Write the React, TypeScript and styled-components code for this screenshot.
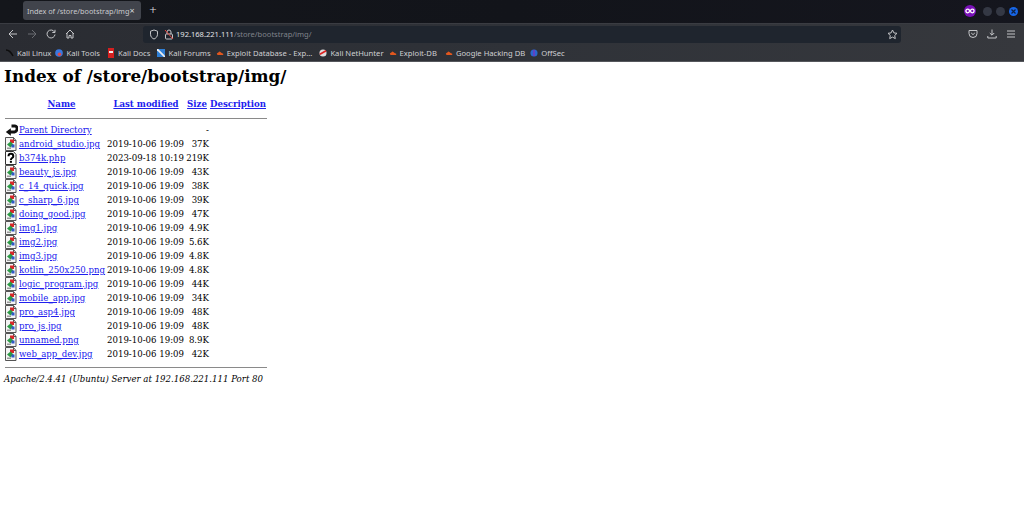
import React from "react";
import styled, { createGlobalStyle } from "styled-components";

const Global = createGlobalStyle`
  html, body { margin: 0; padding: 0; background: #fff; }
  body { width: 1024px; height: 510px; overflow: hidden; }
`;

const Browser = styled.div`
  width: 1024px;
  height: 510px;
  display: flex;
  flex-direction: column;
  overflow: hidden;
`;

const Chrome = styled.div`
  font-family: "Noto Sans", "Open Sans", sans-serif;
  color: #d5d6d8;
  flex: none;
`;

const TabBar = styled.div`
  height: 22px;
  background: linear-gradient(90deg, #14161b 0%, #12141a 50%, #15161e 100%);
  display: flex;
  align-items: flex-start;
  padding: 1px 6px 0 23px;
`;

const Tab = styled.div`
  width: 118px;
  height: 19px;
  background: #41444c;
  border-radius: 3px;
  display: flex;
  align-items: center;
  padding-left: 4px;
  box-sizing: border-box;
  font-size: 7.3px;
  color: #c9cacd;
  white-space: nowrap;
`;

const TabClose = styled.span`
  font-size: 9px;
  color: #d5d6d8;
`;

const NewTab = styled.span`
  width: 24px;
  text-align: center;
  font-size: 13px;
  line-height: 19px;
  color: #e0e0e2;
  font-weight: 300;
`;

const Spacer = styled.div`
  flex: 1;
`;

const WindowButtons = styled.div`
  display: flex;
  align-items: center;
  gap: 4px;
  height: 20px;
`;

const WinDot = styled.span<{ $color: string }>`
  width: 9px;
  height: 9px;
  border-radius: 50%;
  background: ${(p) => p.$color};
  display: flex;
  align-items: center;
  justify-content: center;
`;

const MaskBadge = styled.span`
  width: 12px;
  height: 12px;
  border-radius: 50%;
  background: #7a10b8;
  display: flex;
  align-items: center;
  justify-content: center;
  margin-right: 3px;
`;

const Toolbar = styled.div`
  height: 21px;
  background: linear-gradient(90deg, #2a2c32 0%, #2f3238 50%, #36383d 100%);
  border-top: 1px solid #3a3c42;
  box-sizing: border-box;
  display: flex;
  align-items: center;
  padding-left: 8px;
  padding-right: 8px;
`;

const NavIcon = styled.span<{ $w: number }>`
  width: ${(p) => p.$w}px;
  display: flex;
  align-items: center;
  flex: none;
`;

const UrlBar = styled.div`
  width: 758px;
  height: 17px;
  margin-left: 5px;
  background: #1f252e;
  border-radius: 3px;
  display: flex;
  align-items: center;
  padding: 0 3px 0 6px;
  box-sizing: border-box;
  font-size: 7.55px;
  flex: none;
`;

const UrlHost = styled.span`
  color: #e2e3e5;
`;

const UrlPath = styled.span`
  color: #7f838a;
`;

const RightTools = styled.div`
  display: flex;
  align-items: center;
  gap: 9px;
  margin-left: auto;
`;

const Bookmarks = styled.div`
  height: 18px;
  background: linear-gradient(90deg, #2a2c32 0%, #2f3238 50%, #36383d 100%);
  border-bottom: 1px solid #55575c;
  box-sizing: border-box;
  display: flex;
  align-items: center;
  padding-left: 6px;
  font-size: 7.65px;
  color: #cfd0d3;
  white-space: nowrap;
`;

const Bookmark = styled.span<{ $gap: number }>`
  display: flex;
  align-items: center;
  gap: 3px;
  margin-right: ${(p) => p.$gap}px;
`;

const Page = styled.main`
  flex: 1;
  background: #fff;
  color: #000;
  font-family: "DejaVu Serif", serif;
  font-size: 8.6px;
  padding: 0 0 0 4px;
`;

const Title = styled.h1`
  margin: 3px 0 0;
  font-size: 16.85px;
  line-height: 23px;
  font-weight: 700;
`;

const Listing = styled.table`
  border-collapse: collapse;
  margin: 9px 0 0 1px;
  width: 262px;
  table-layout: fixed;
`;

const Head = styled.th<{ $w: number; $shift?: number }>`
  width: ${(p) => p.$w}px;
  height: 14px;
  padding: 0 ${(p) => p.$shift ?? 0}px 0 0;
  box-sizing: border-box;
  font-weight: 700;
  text-align: center;
  white-space: nowrap;
`;

const Cell = styled.td<{ $right?: boolean }>`
  height: 14px;
  padding: 0;
  line-height: 14px;
  white-space: nowrap;
  text-align: ${(p) => (p.$right ? "right" : "left")};
`;

const IconCell = styled.td`
  height: 14px;
  padding: 0;
  line-height: 0;
`;

const RuleCell = styled.th<{ $height: number; $offset: number }>`
  padding: ${(p) => p.$offset}px 0 0;
  height: ${(p) => p.$height}px;
  box-sizing: border-box;
  vertical-align: top;
`;

const Rule = styled.div`
  height: 1px;
  background: #8a8a8a;
`;

const FileLink = styled.a`
  color: #2020ee;
  text-decoration: underline;
`;

const Footer = styled.address`
  margin-top: 2px;
  font-style: italic;
  line-height: 12px;
`;

const ImageIcon = () => (
  <svg width="12" height="14" viewBox="0 0 12 14">
    <path d="M.5.5h8l2.500 3v10H.5z" fill="#f4f4f4" stroke="#555" />
    <path d="M8.500.5v3H11" fill="none" stroke="#555" />
    <rect x="5" y="2.500" width="4" height="3.500" fill="#d9262a" />
    <path d="M2 7.500 5.500 4.500 8.500 7.500 5.500 10.500z" fill="#2c9a45" />
    <rect x="6.500" y="7.500" width="3" height="3" fill="#3058c8" />
    <rect x="2" y="10.500" width="4" height="1.500" fill="#999" />
  </svg>
);

const UnknownIcon = () => (
  <svg width="12" height="14" viewBox="0 0 12 14">
    <path d="M.5.5h8l2.500 3v10H.5z" fill="#fff" stroke="#333" />
    <path d="M3.500 5.200c0-3.200 4.800-3.200 4.800 0 0 1.900-2.400 1.800-2.400 3.700" fill="none" stroke="#000" strokeWidth="2" />
    <rect x="4.900" y="9.800" width="2" height="2" fill="#000" />
  </svg>
);

const ParentIcon = () => (
  <svg width="13" height="12" viewBox="0 0 13 12">
    <path d="M6.500 2H10c2.800 0 2.800 5.500-.5 6H5" fill="none" stroke="#111" strokeWidth="2.800" />
    <path d="M.8 8l5-3.800v7.600z" fill="#111" />
  </svg>
);

const files: [string, string, string, "img" | "unk"][] = [
  ["android_studio.jpg", "2019-10-06 19:09", "37K", "img"],
  ["b374k.php", "2023-09-18 10:19", "219K", "unk"],
  ["beauty_js.jpg", "2019-10-06 19:09", "43K", "img"],
  ["c_14_quick.jpg", "2019-10-06 19:09", "38K", "img"],
  ["c_sharp_6.jpg", "2019-10-06 19:09", "39K", "img"],
  ["doing_good.jpg", "2019-10-06 19:09", "47K", "img"],
  ["img1.jpg", "2019-10-06 19:09", "4.9K", "img"],
  ["img2.jpg", "2019-10-06 19:09", "5.6K", "img"],
  ["img3.jpg", "2019-10-06 19:09", "4.8K", "img"],
  ["kotlin_250x250.png", "2019-10-06 19:09", "4.8K", "img"],
  ["logic_program.jpg", "2019-10-06 19:09", "44K", "img"],
  ["mobile_app.jpg", "2019-10-06 19:09", "34K", "img"],
  ["pro_asp4.jpg", "2019-10-06 19:09", "48K", "img"],
  ["pro_js.jpg", "2019-10-06 19:09", "48K", "img"],
  ["unnamed.png", "2019-10-06 19:09", "8.9K", "img"],
  ["web_app_dev.jpg", "2019-10-06 19:09", "42K", "img"],
];

const Stroke = { fill: "none", stroke: "#c4c5c8", strokeWidth: 1 } as const;

const Drop = () => (
  <svg width="8" height="8" viewBox="0 0 10 10">
    <path d="M1 6c1-2 2-1 3-3 1 0 2 1 3 2l2 1v1.500H2z" fill="#e2571e" />
  </svg>
);

export default function App() {
  return (
    <Browser>
      <Global />
      <Chrome>
        <TabBar>
          <Tab>
            Index of /store/bootstrap/img<TabClose>×</TabClose>
          </Tab>
          <NewTab>+</NewTab>
          <Spacer />
          <WindowButtons>
            <MaskBadge>
              <svg width="10" height="6" viewBox="0 0 10 6">
                <circle cx="2.700" cy="3" r="1.800" fill="none" stroke="#fff" strokeWidth="1.300" />
                <circle cx="7.300" cy="3" r="1.800" fill="none" stroke="#fff" strokeWidth="1.300" />
              </svg>
            </MaskBadge>
            <WinDot $color="#343844" />
            <WinDot $color="#343844" />
            <WinDot $color="#1766e8">
              <svg width="5" height="5" viewBox="0 0 5 5">
                <path d="M.5.5l4 4M4.500.5l-4 4" stroke="#10213f" strokeWidth="1.200" />
              </svg>
            </WinDot>
          </WindowButtons>
        </TabBar>
        <Toolbar>
          <NavIcon $w={19}>
            <svg width="10" height="10" viewBox="0 0 10 10"><path d="M5 1 1 5l4 4M1 5h8" {...Stroke} /></svg>
          </NavIcon>
          <NavIcon $w={19}>
            <svg width="10" height="10" viewBox="0 0 10 10"><path d="M5 1l4 4-4 4M9 5H1" fill="none" stroke="#6b6d72" /></svg>
          </NavIcon>
          <NavIcon $w={19}>
            <svg width="10" height="10" viewBox="0 0 10 10"><path d="M8.500 3A4 4 0 1 0 9 5.500M9 .8V3.500H6.300" {...Stroke} /></svg>
          </NavIcon>
          <NavIcon $w={73}>
            <svg width="10" height="10" viewBox="0 0 10 10"><path d="M1 5 5 1l4 4M2 4v5h2V6.500h2V9h2V4" {...Stroke} /></svg>
          </NavIcon>
          <UrlBar>
            <NavIcon $w={15}>
              <svg width="10" height="11" viewBox="0 0 10 11"><path d="M5 1 1.500 2.200v3C1.500 8 3.500 9.500 5 10c1.500-.5 3.500-2 3.500-4.800v-3z" {...Stroke} /></svg>
            </NavIcon>
            <NavIcon $w={12}>
              <svg width="10" height="11" viewBox="0 0 10 11">
                <rect x="1.500" y="5" width="7" height="5" rx="1" fill="none" stroke="#c4c5c8" />
                <path d="M3 5V3a2 2 0 0 1 4 0v2" fill="none" stroke="#c4c5c8" />
                <path d="M1 1l8 9" stroke="#e0443e" />
              </svg>
            </NavIcon>
            <UrlHost>192.168.221.111</UrlHost>
            <UrlPath>/store/bootstrap/img/</UrlPath>
            <Spacer />
            <svg width="11" height="11" viewBox="0 0 11 11">
              <path d="M5.500 1l1.400 2.900 3.100.4-2.300 2.200.6 3.100-2.800-1.500-2.800 1.500.6-3.100L1 4.300l3.100-.4z" {...Stroke} />
            </svg>
          </UrlBar>
          <RightTools>
            <svg width="10" height="10" viewBox="0 0 10 10"><path d="M1 1.500h8v3a4 4 0 0 1-8 0zM3.200 4 5 5.600 6.800 4" {...Stroke} /></svg>
            <svg width="10" height="10" viewBox="0 0 10 10"><path d="M5 .5V6M2.800 4 5 6.200 7.200 4M.8 7v2h8.400V7" {...Stroke} /></svg>
            <svg width="10" height="10" viewBox="0 0 10 10"><path d="M1 2h8M1 5h8M1 8h8" {...Stroke} /></svg>
          </RightTools>
        </Toolbar>
        <Bookmarks>
          <Bookmark $gap={4}>
            <svg width="8" height="8" viewBox="0 0 8 8"><path d="M0 1c3 0 5 2 7 6" fill="none" stroke="#0d0d0d" strokeWidth="1.500" /></svg>
            Kali Linux
          </Bookmark>
          <Bookmark $gap={7}>
            <svg width="8" height="8" viewBox="0 0 9 9"><circle cx="4.500" cy="4.500" r="4.300" fill="#3a78e0" /><circle cx="5" cy="6" r="2" fill="#e04a4a" /></svg>
            Kali Tools
          </Bookmark>
          <Bookmark $gap={7}>
            <svg width="8" height="10" viewBox="0 0 8 10"><rect x="1" width="6" height="10" fill="#d42020" /><rect x="2" y="3" width="4" height="2" fill="#eee" /></svg>
            Kali Docs
          </Bookmark>
          <Bookmark $gap={5}>
            <svg width="8" height="8" viewBox="0 0 9 9"><rect width="9" height="9" fill="#2f7fd6" /><path d="M0 0l9 9" stroke="#eee" strokeWidth="2" /></svg>
            Kali Forums
          </Bookmark>
          <Bookmark $gap={7}>
            <Drop />
            Exploit Database - Exp...
          </Bookmark>
          <Bookmark $gap={5}>
            <svg width="8" height="8" viewBox="0 0 9 9"><circle cx="4.500" cy="4.500" r="4" fill="#ddd" /><path d="M1 6l7-4" stroke="#d22" strokeWidth="2" /></svg>
            Kali NetHunter
          </Bookmark>
          <Bookmark $gap={8}>
            <Drop />
            Exploit-DB
          </Bookmark>
          <Bookmark $gap={5}>
            <Drop />
            Google Hacking DB
          </Bookmark>
          <Bookmark $gap={0}>
            <svg width="8" height="8" viewBox="0 0 9 9"><circle cx="4.500" cy="4.500" r="4" fill="#2a66d0" /><rect x="3.500" y="1" width="2" height="7" fill="#6a3fc0" /></svg>
            OffSec
          </Bookmark>
        </Bookmarks>
      </Chrome>
      <Page>
        <Title>Index of /store/bootstrap/img/</Title>
        <Listing>
          <thead>
            <tr>
              <Head $w={14} />
              <Head $w={88} $shift={3}><FileLink>Name</FileLink></Head>
              <Head $w={78}><FileLink>Last modified</FileLink></Head>
              <Head $w={24}><FileLink>Size</FileLink></Head>
              <Head $w={58}><FileLink>Description</FileLink></Head>
            </tr>
            <tr>
              <RuleCell colSpan={5} $height={12} $offset={7}><Rule /></RuleCell>
            </tr>
          </thead>
          <tbody>
            <tr>
              <IconCell><ParentIcon /></IconCell>
              <Cell><FileLink>Parent Directory</FileLink></Cell>
              <Cell />
              <Cell $right>-</Cell>
              <Cell />
            </tr>
            {files.map(([name, date, size, kind]) => (
              <tr key={name}>
                <IconCell>{kind === "img" ? <ImageIcon /> : <UnknownIcon />}</IconCell>
                <Cell><FileLink>{name}</FileLink></Cell>
                <Cell>{date}</Cell>
                <Cell $right>{size}</Cell>
                <Cell />
              </tr>
            ))}
            <tr>
              <RuleCell colSpan={5} $height={10} $offset={6}><Rule /></RuleCell>
            </tr>
          </tbody>
        </Listing>
        <Footer>Apache/2.4.41 (Ubuntu) Server at 192.168.221.111 Port 80</Footer>
      </Page>
    </Browser>
  );
}
